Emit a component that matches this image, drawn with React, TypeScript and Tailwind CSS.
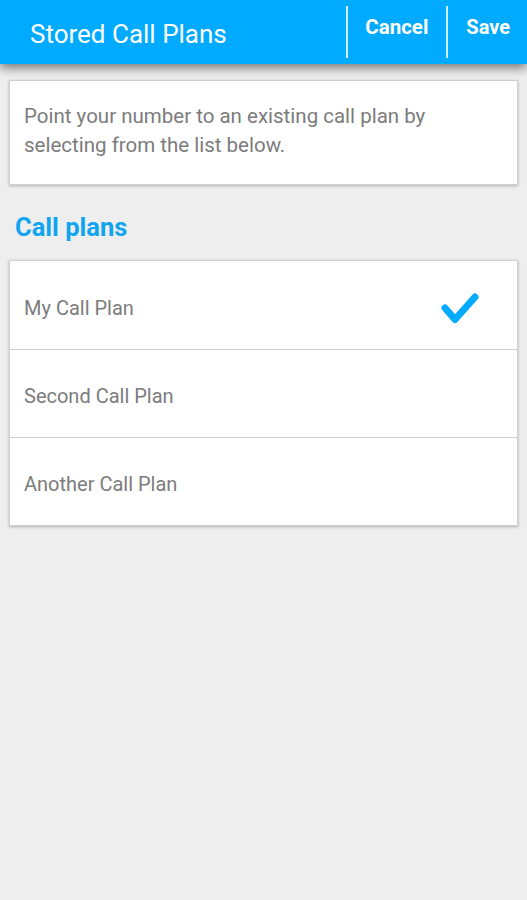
const plans = [
  { name: "My Call Plan", selected: true },
  { name: "Second Call Plan", selected: false },
  { name: "Another Call Plan", selected: false },
];

function CheckMark() {
  return (
    <svg width="40" height="34" viewBox="0 0 40 34" fill="none" aria-hidden>
      <polyline
        points="5,17 15,28.5 35,6"
        stroke="#00aaff"
        strokeWidth="7"
        strokeLinecap="round"
        strokeLinejoin="round"
      />
    </svg>
  );
}

export default function App() {
  return (
    <div
      className="min-h-[900px] bg-[#eeeeee]"
      style={{ fontFamily: "Roboto, 'Noto Sans', sans-serif" }}
    >
      {/* app bar */}
      <header className="relative z-10 flex h-[64px] items-stretch bg-[#00aaff] shadow-[0_4px_10px_rgba(0,0,0,0.5)]">
        <h1 className="flex flex-1 items-center pl-[30px] pt-[4px] text-[26px] text-white">
          Stored Call Plans
        </h1>
        <div className="my-[6px] w-[2px] bg-white/80" />
        <button className="pl-[17px] pr-[18px] pb-[10px] text-[20.5px] font-bold text-white">Cancel</button>
        <div className="my-[6px] w-[2px] bg-white/80" />
        <button className="pl-[18px] pr-[17px] pb-[10px] text-[20px] font-bold text-white">Save</button>
      </header>

      <div className="px-[9px] pt-[16px]">
        {/* intro card */}
        <div className="border border-[#d0d0d0] bg-white px-[14px] pt-[21px] pb-[24px] text-[20.5px] leading-[29px] text-[#7c7c7c] shadow-[0_1px_3px_rgba(0,0,0,0.25)]">
          Point your number to an existing call plan by selecting from the list below.
        </div>

        <h2 className="px-[6px] pt-[27px] pb-[18px] text-[25.5px] font-bold leading-[30px] text-[#11a4f0]">
          Call plans
        </h2>

        {/* plan list */}
        <ul className="border border-[#d0d0d0] bg-white shadow-[0_1px_3px_rgba(0,0,0,0.25)]">
          {plans.map((p, i) => (
            <li
              key={p.name}
              className={
                "flex h-[88px] items-center justify-between pl-[14px] pr-[37px] pt-[5px] text-[20px] text-[#7c7c7c]" +
                (i > 0 ? " border-t border-[#cfcfcf]" : "")
              }
            >
              <span>{p.name}</span>
              {p.selected && <CheckMark />}
            </li>
          ))}
        </ul>
      </div>
    </div>
  );
}
